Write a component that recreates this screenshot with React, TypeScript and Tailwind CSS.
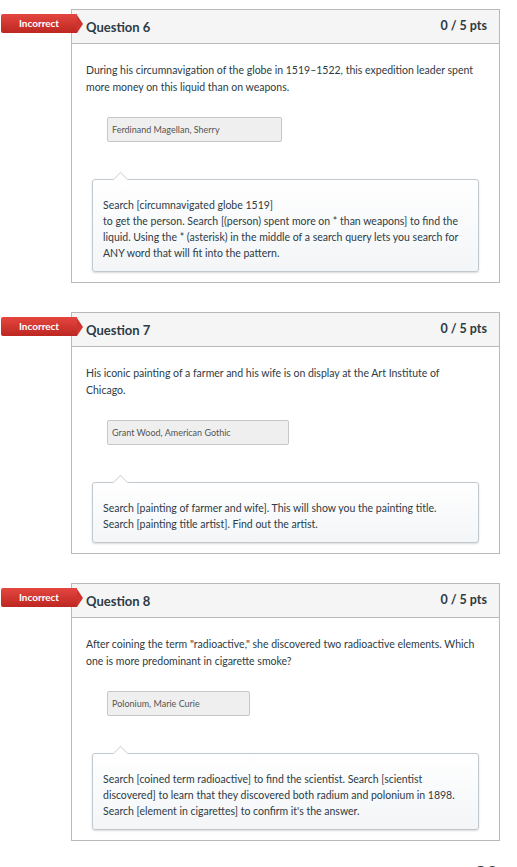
const questions = [
  {
    n: 6,
    text: "During his circumnavigation of the globe in 1519–1522, this expedition leader spent more money on this liquid than on weapons.",
    answer: "Ferdinand Magellan, Sherry",
    answerW: "w-[175px]",
    comment: [
      "Search [circumnavigated globe 1519]",
      "to get the person. Search [(person) spent more on * than weapons] to find the liquid. Using the * (asterisk) in the middle of a search query lets you search for ANY word that will fit into the pattern.",
    ],
  },
  {
    n: 7,
    text: "His iconic painting of a farmer and his wife is on display at the Art Institute of Chicago.",
    answer: "Grant Wood, American Gothic",
    answerW: "w-[182px]",
    comment: [
      "Search [painting of farmer and wife]. This will show you the painting title. Search [painting title artist]. Find out the artist.",
    ],
  },
  {
    n: 8,
    text: "After coining the term \"radioactive,\" she discovered two radioactive elements. Which one is more predominant in cigarette smoke?",
    answer: "Polonium, Marie Curie",
    answerW: "w-[143px]",
    comment: [
      "Search [coined term radioactive] to find the scientist. Search [scientist discovered] to learn that they discovered both radium and polonium in 1898. Search [element in cigarettes] to confirm it's the answer.",
    ],
  },
];

type Q = (typeof questions)[number];

const Badge = () => (
  <div className="absolute left-[-71px] top-[4px] flex items-center">
    <div className="h-[19px] w-[76px] flex items-center justify-center bg-gradient-to-b from-[#e4463f] to-[#bd2621] text-white text-[10px] font-bold rounded-l-[2px]">
      Incorrect
    </div>
    <div className="w-0 h-0 border-y-[9.5px] border-y-transparent border-l-[6px] border-l-[#cf3530]" />
  </div>
);

const QuestionCard = ({ q }: { q: Q }) => (
  <div className="relative ml-[71px] w-[429px] border border-[#b9b9b9] bg-white">
    <Badge />
    <div className="h-[34px] flex items-center justify-between pl-[14px] pr-[12px] bg-[#f5f5f5] border-b border-[#b9b9b9]">
      <h2 className="text-[13px] font-bold text-[#2d3b45] mt-[3px]">Question {q.n}</h2>
      <span className="text-[12.5px] font-bold text-[#2d3b45]">0 / 5 pts</span>
    </div>
    <div className="pl-[14px] pr-[16px] pt-[18px] pb-[10px]">
      <p className="max-w-[394px] text-[10.5px] leading-[17px] text-[#2d3b45]">{q.text}</p>
      <div
        className={`${q.answerW} mt-[21px] ml-[21px] h-[25px] flex items-center px-[4px] bg-[#efefef] border border-[#c7c7c7] rounded-[2px] text-[9px] text-[#555]`}
      >
        {q.answer}
      </div>
      <div className="relative mt-[37px] ml-[6px] w-[387px] border border-[#c2c9ce] rounded-[3px] bg-gradient-to-b from-white to-[#f3f5f7] shadow-[0_1px_2px_rgba(0,0,0,0.15)] pl-[10px] pr-[14px] pt-[17px] pb-[10px] text-[10.5px] leading-[16px] text-[#2d3b45]">
        <div className="absolute left-[22px] top-[-6px] w-[11px] h-[11px] rotate-45 bg-white border-l border-t border-[#d6dbdf]" />
        {q.comment.map((c, i) => (
          <p key={i}>{c}</p>
        ))}
      </div>
    </div>
  </div>
);

export default function App() {
  return (
    <div className="w-[517px] h-[867px] overflow-hidden bg-white font-['Lato','Liberation_Sans',sans-serif] pt-[9px]">
      <div className="flex flex-col gap-[29px]">
        {questions.map((q) => (
          <QuestionCard key={q.n} q={q} />
        ))}
      </div>
      <div className="ml-[71px] w-[429px] mt-[17px] flex justify-end items-baseline gap-[10px] text-[#2d3b45]">
        <span className="text-[12px] font-bold">Quiz Score:</span>
        <span className="text-[20px] font-bold pr-[2px]">20</span>
      </div>
    </div>
  );
}
